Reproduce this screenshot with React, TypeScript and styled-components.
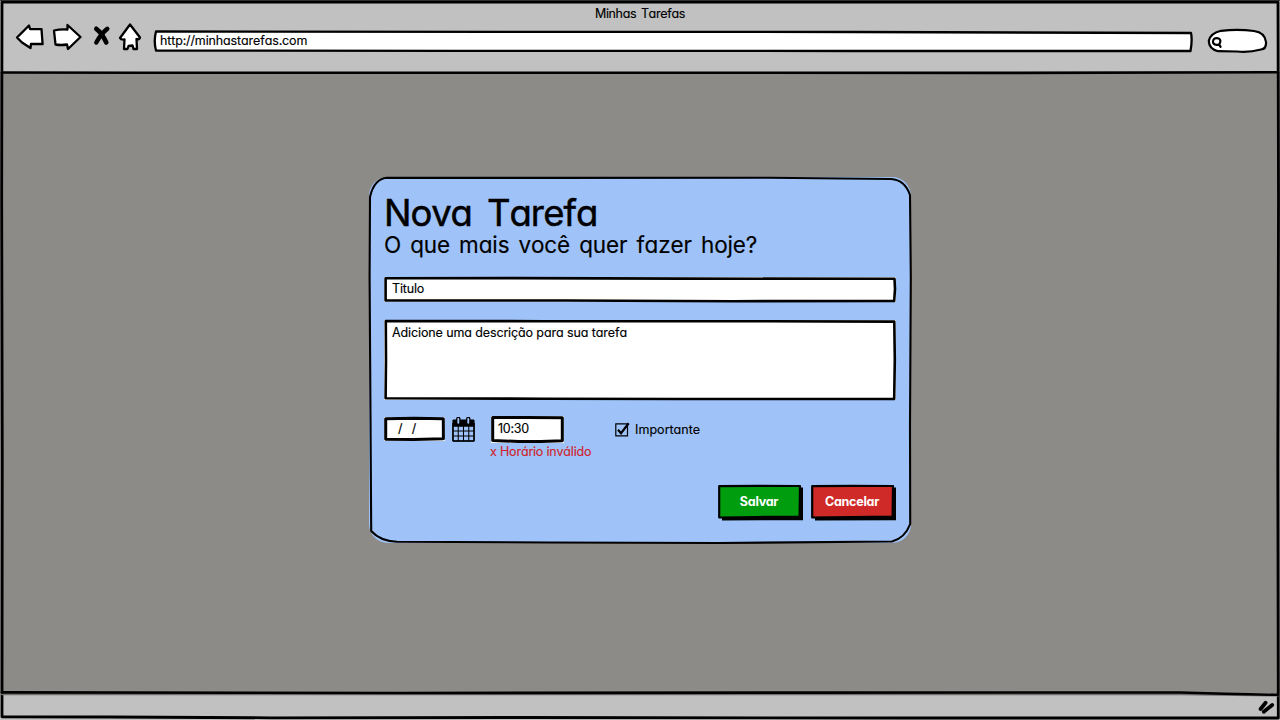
import React from 'react';
import styled, { createGlobalStyle } from 'styled-components';

const GlobalStyle = createGlobalStyle`
  * { box-sizing: border-box; }
  body { margin: 0; background: #8d8b88; }
  h1, h2, p { margin: 0; font-weight: 400; }
`;

const Window = styled.div`
  position: relative;
  width: 1280px;
  height: 720px;
  display: flex;
  flex-direction: column;
  overflow: hidden;
  background: #8d8b88;
  color: #000;
  font: 12.5px/18px Inter, 'Liberation Sans', sans-serif;
  font-feature-settings: 'cv11' 1;
  font-kerning: none;
  -webkit-text-stroke: 0.15px currentColor;
`;

const Header = styled.header`
  height: 72px;
  background: #c1c1c1;
  padding-top: 5px;
`;

const WindowTitle = styled.div`
  text-align: center;
  height: 18px;
  letter-spacing: -0.35px;
  word-spacing: 1.5px;
`;

const Toolbar = styled.div`
  display: flex;
  align-items: flex-start;
  padding: 0 12px 0 15px;
`;

const NavIcons = styled.svg`
  display: block;
  width: 139px;
  height: 32px;
`;

const AddressBar = styled.div`
  position: relative;
  width: 1039px;
  height: 22px;
  margin-top: 7px;
  padding: 2px 6px;
  letter-spacing: -0.14px;
`;

const SearchBox = styled.svg`
  display: block;
  width: 62px;
  height: 26px;
  margin: 5px 0 0 13px;
`;

const Body = styled.main`
  flex: 1;
`;

const Footer = styled.footer`
  height: 27px;
  background: #c1c1c1;
  display: flex;
  justify-content: flex-end;
  padding: 5px 4px 0 0;
`;

const Outline = styled.svg`
  position: absolute;
  inset: 0;
  width: 100%;
  height: 100%;
  overflow: visible;
  pointer-events: none;
  fill: none;
  stroke: #000;
  stroke-width: 2.6;
  stroke-linecap: round;
  stroke-linejoin: round;
`;

const Content = styled.span`
  position: relative;
  white-space: pre;
`;

const Overlay = styled.div`
  position: absolute;
  inset: 0;
  display: flex;
  align-items: center;
  justify-content: center;
`;

const Dialog = styled.form`
  position: relative;
  width: 542px;
  height: 366px;
  padding: 14px 15px 0;
  background: #9fc3f8;
  border-radius: 19px;
`;

const Heading = styled.h1`
  position: relative;
  font-size: 36.5px;
  line-height: 44px;
  letter-spacing: -1.1px;
  word-spacing: 6px;
  -webkit-text-stroke: 0.5px #000;
`;

const Subtitle = styled.h2`
  position: relative;
  font-size: 22.5px;
  line-height: 20px;
  letter-spacing: -0.13px;
  word-spacing: 2.9px;
  margin-bottom: 22px;
`;

const Field = styled.div<{ $w: number; $h: number; $pad?: string; $spacing?: number }>`
  position: relative;
  width: ${(p) => p.$w}px;
  height: ${(p) => p.$h}px;
  padding: ${(p) => p.$pad ?? '4px 8px'};
  background: #fff;
  letter-spacing: ${(p) => p.$spacing ?? -0.3}px;
`;

const Stack = styled.div`
  display: flex;
  flex-direction: column;
  gap: 18px;
`;

const Options = styled.div`
  display: flex;
  align-items: flex-start;
  height: 27px;
  margin-top: 16px;
`;

const DateField = styled(Field)`
  margin-top: 1px;
`;

const CalendarIcon = styled.svg`
  display: block;
  width: 23px;
  height: 26px;
  margin: 1px 16px 0 7px;
`;

const CheckLabel = styled.div`
  display: flex;
  gap: 4px;
  margin: 5px 0 0 50px;
  letter-spacing: 0.05px;
`;

const CheckIcon = styled.svg`
  display: block;
  width: 17px;
  height: 18px;
  margin-top: -1px;
`;

const ErrorText = styled.p`
  position: relative;
  color: #d01f2e;
  line-height: 18px;
  margin-left: 106px;
  letter-spacing: -0.18px;
`;

const Actions = styled.div`
  display: flex;
  justify-content: flex-end;
  gap: 8px;
  margin-top: 24px;
`;

const Button = styled.button<{ $color: string }>`
  position: relative;
  width: 85px;
  height: 36px;
  padding: 0 3px 2px 0;
  border: 0;
  background: none;
  color: #fff;
  font: 700 12.5px/18px Inter, 'Liberation Sans', sans-serif;
  font-feature-settings: 'cv11' 1;
  -webkit-text-stroke: 0;
  letter-spacing: -0.25px;
  .face { fill: ${(p) => p.$color}; }
`;

function ActionButton({ color, children }: { color: string; children: string }) {
  return (
    <Button $color={color} type="button">
      <Outline viewBox="0 0 85 36">
        <path d="M4 4L85 2.5V35.2L4 35.5Z" fill="#000" stroke="none" />
        <path className="face" d="M1.2 1.2L40 .8L82 1L81.6 31.6L40 32L1.2 32.5Z" strokeWidth="2.2" />
      </Outline>
      <Content>{children}</Content>
    </Button>
  );
}

export default function App() {
  return (
    <>
      <GlobalStyle />
      <Window>
        <Header>
          <WindowTitle>Minhas Tarefas</WindowTitle>
          <Toolbar>
            <NavIcons viewBox="15 23 139 32" fill="#fff" stroke="#000" strokeWidth="2.3" strokeLinejoin="round" strokeLinecap="round">
              <path d="M17 37.5L29 25.5L30 29L41.5 29.2L42.6 44L31 43.8L30.5 48L22 42.5Z" />
              <path d="M54 30.5Q60 29 67.5 29.5L67.5 25L80.5 37L68 49L67 44.5Q61 45.5 55.5 44.5Z" />
              <path d="M96.3 28.8Q102 33 106.3 42.5" strokeWidth="4.6" />
              <path d="M107.3 28.8Q101 34 96.3 42.5" strokeWidth="4.4" />
              <path d="M130 24.5L140 37.5Q139 40 136.5 39L137 49H133.5L132.5 45.5L128.5 46L127.5 49H124L124.5 39.5Q121 40 120 38Z" />
            </NavIcons>
            <AddressBar>
              <Outline viewBox="0 0 1039 22">
                <path d="M2 1.5L350 1.8L700 2L1037 3Q1038.5 10 1036.5 21L700 21L300 20.8L2 20.5Q-.5 11 2 1.5Z" fill="#fff" strokeWidth="2.3" />
              </Outline>
              <Content>http://minhastarefas.com</Content>
            </AddressBar>
            <SearchBox viewBox="1206 28 62 26" fill="#fff" stroke="#000" strokeWidth="2.2" strokeLinecap="round">
              <path d="M1221 30.8Q1238 28.8 1254 31Q1265 32.5 1266 42Q1266.5 49 1261 49.5Q1248 53 1237 51.5L1218 51.2Q1209 49 1208.8 41Q1210 33.5 1221 30.8Z" />
              <path d="M1215 38.3Q1219.7 37.3 1220.4 40.8Q1220.2 45 1216.7 44.8Q1212.7 44.3 1213 41.3Q1213.2 39 1215 38.3ZM1219 44.3L1220.6 46.8" />
            </SearchBox>
          </Toolbar>
        </Header>
        <Body />
        <Footer>
          <svg width="18" height="18" viewBox="1258 698 18 18" stroke="#000" strokeWidth="3.8" strokeLinecap="round">
            <path d="M1265.6 702.8L1260.6 709M1272.2 705L1263.8 711.8" />
          </svg>
        </Footer>
        <Outline viewBox="0 0 1280 720">
          <path d="M0 .5H1280" stroke="#3c403c" strokeWidth="1" />
          <path d="M2 2.2L1278 2.2L1278.5 200L1277.8 460L1278.3 718L900 718L520 717.5L270 717.8L110 717L2 716.8L2.3 460L1.7 200Z" strokeWidth="2.8" />
          <path d="M2 72.5L140 72.8L600 72.7L1000 72.9L1278 72.3" />
          <path d="M2 694.2L1180 694.2L1278 695.6" stroke="#716f6d" strokeWidth="2" />
          <path d="M2 692.4L400 693L800 692.6L1180 692.5L1225 693.8L1278 694.8" />
        </Outline>
        <Overlay>
          <Dialog>
            <Outline viewBox="0 0 542 366">
              <path d="M18 .8L180 .9L400 .7L522 2Q536 3 541 18L541.8 100L541 250L541.2 347Q536 361 523 364.5L350 366L180 365.5L28 364.8Q11 364 2.2 354L1.5 240L.6 100L1 20Q5 2 18 .8Z" strokeWidth="2.1" />
            </Outline>
            <Heading>Nova Tarefa</Heading>
            <Subtitle>O que mais você quer fazer hoje?</Subtitle>
            <Stack>
              <Field $w={512} $h={25} $pad="3px 8px" $spacing={-0.15}>
                <Outline viewBox="0 0 512 25">
                  <path d="M1.6 1.2L130 1.1L300 1.6L510.5 1.8L511 12L510.2 24L350 24.2L180 23.5L1.6 23.4Z" />
                </Outline>
                <Content>Titulo</Content>
              </Field>
              <Field $w={512} $h={80} $spacing={-0.11}>
                <Outline viewBox="0 0 512 80">
                  <path d="M1.8 1L160 1.2L380 1.3L510.3 1.6L510.8 40L510.2 79L300 79L160 78.7L1.6 78.3L2 40Z" />
                </Outline>
                <Content>Adicione uma descrição para sua tarefa</Content>
              </Field>
            </Stack>
            <Options>
              <DateField $w={61} $h={24} $pad="3px 14px" $spacing={0.7}>
                <Outline viewBox="0 0 61 24">
                  <path d="M1.7 1.8L30 1.3L59.3 1.8L59.4 21.8L30 22.5L1.7 22.2Z" strokeWidth="3" />
                </Outline>
                <Content>/{'  '}/</Content>
              </DateField>
              <CalendarIcon viewBox="0 0 24 26" preserveAspectRatio="none" fill="none" stroke="#000">
                <path d="M1 3H23V9H1Z" fill="#000" />
                <path d="M1 9H23V24H1ZM6.5 9V24M12 9V24M17.5 9V24M1 14H23M1 19H23" strokeWidth="1.1" />
                <path d="M1 24H23M1 6V24M23 6V24" strokeWidth="1.5" />
                <path d="M6.6 2V5.8M17 2V5.8" strokeWidth="4.6" strokeLinecap="round" />
                <path d="M6.6 2V5.8M17 2V5.8" stroke="#9fc3f8" strokeWidth="2" strokeLinecap="round" />
              </CalendarIcon>
              <Field $w={73} $h={27} $pad="4px 7px" $spacing={-0.25}>
                <Outline viewBox="0 0 73 27">
                  <path d="M1.7 1.5L35 1.4L71.3 1.8L71.3 24.7L50 25.4L28 25.5L1.7 24.6Z" strokeWidth="3" />
                </Outline>
                <Content>10:30</Content>
              </Field>
              <CheckLabel>
                <CheckIcon viewBox="0 0 17 18" fill="none" stroke="#000">
                  <path d="M1.8 3.8H13.5V15.8H1.8Z" strokeWidth="1.2" />
                  <path d="M4 9.8L7 13.2L14.7 3.3" strokeWidth="2.2" />
                </CheckIcon>
                <Content>Importante</Content>
              </CheckLabel>
            </Options>
            <ErrorText>x Horário inválido</ErrorText>
            <Actions>
              <ActionButton color="#009e0f">Salvar</ActionButton>
              <ActionButton color="#cf2a27">Cancelar</ActionButton>
            </Actions>
          </Dialog>
        </Overlay>
      </Window>
    </>
  );
}
